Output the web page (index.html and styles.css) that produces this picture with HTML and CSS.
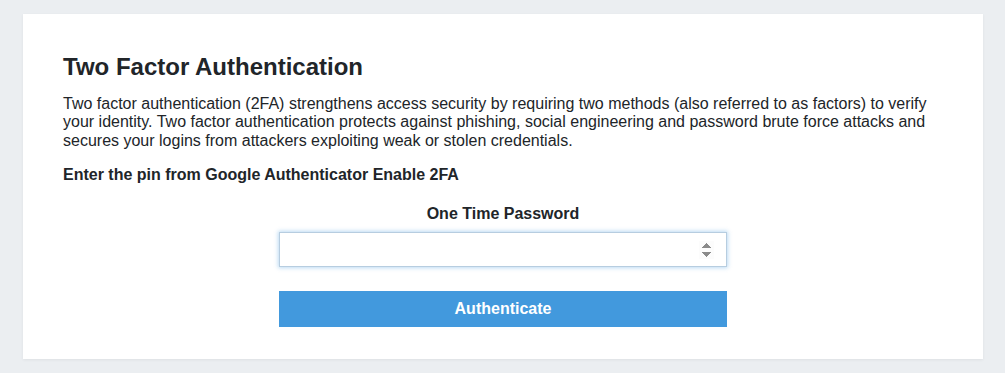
FILE: index.html
```html
<!DOCTYPE html>
<html lang="en">
<head>
<meta charset="utf-8">
<title>Two Factor Authentication</title>
<link rel="stylesheet" href="styles.css">
</head>
<body>
<main class="card">
  <h1 class="title">Two Factor Authentication</h1>
  <p class="intro">Two factor authentication (2FA) strengthens access security by requiring two methods (also referred to as factors) to verify your identity. Two factor authentication protects against phishing, social engineering and password brute force attacks and secures your logins from attackers exploiting weak or stolen credentials.</p>
  <p class="hint">Enter the pin from Google Authenticator Enable 2FA</p>
  <form class="otp-form">
    <label class="otp-label" for="otp">One Time Password</label>
    <input class="otp-input" id="otp" type="number" autofocus>
    <button class="otp-button" type="button">Authenticate</button>
  </form>
</main>
</body>
</html>
```
FILE: styles.css
```css
html, body {
  margin: 0;
  padding: 0;
}
body {
  background: #ebeef1;
  font-family: "Liberation Sans", Arial, sans-serif;
  color: #212529;
  padding: 14px 22px 15px 23px;
}
.card {
  background: #fff;
  box-shadow: 0 1px 3px rgba(0, 0, 0, 0.06);
  padding: 39px 40px 32px 40px;
}
.title {
  margin: 0 0 14px 0;
  font-size: 24px;
  font-weight: bold;
  line-height: 28px;
}
.intro {
  margin: 0 0 16px 0;
  font-size: 16px;
  line-height: 18.4px;
}
.hint {
  margin: 0 0 20px 0;
  font-size: 16px;
  font-weight: bold;
  line-height: 18.4px;
}
.otp-form {
  width: 448px;
  margin: 0 auto;
  display: flex;
  flex-direction: column;
  align-items: stretch;
}
.otp-label {
  text-align: center;
  font-size: 16px;
  font-weight: bold;
  line-height: 18.4px;
  margin-bottom: 9px;
}
.otp-input {
  box-sizing: border-box;
  height: 35px;
  border: 1px solid #b7cde0;
  background: #fff;
  padding: 0 12px;
  font-family: "Liberation Sans", Arial, sans-serif;
  font-size: 16px;
  color: #495057;
  outline: none;
  box-shadow: 0 0 4px 1px rgba(66, 153, 221, 0.35);
  margin-bottom: 24px;
  border-radius: 0;
}
.otp-button {
  height: 36px;
  border: none;
  background: #4299dd;
  color: #fff;
  font-family: "Liberation Sans", Arial, sans-serif;
  font-size: 16px;
  font-weight: bold;
  border-radius: 0;
  cursor: pointer;
}
```
